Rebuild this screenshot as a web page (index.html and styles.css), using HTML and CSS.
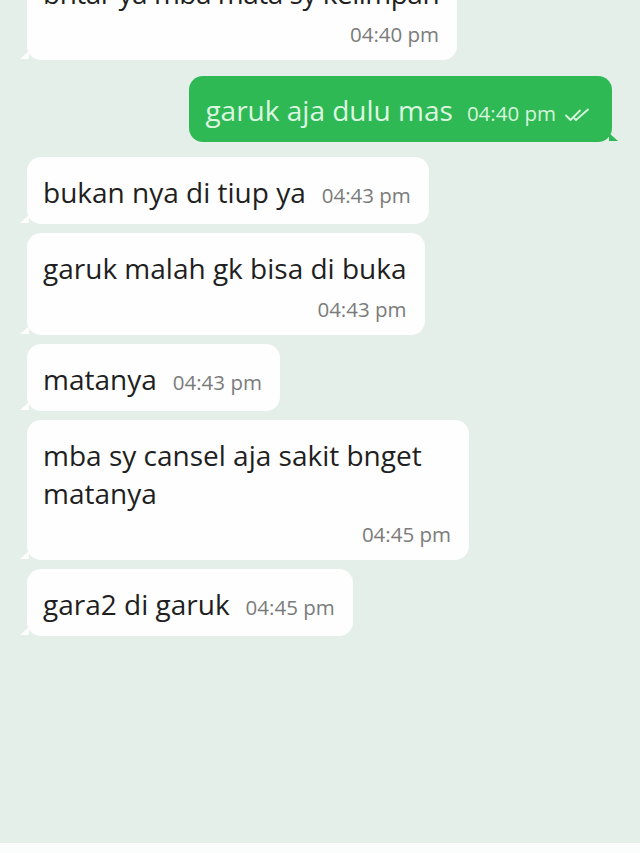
FILE: index.html
```html
<!DOCTYPE html>
<html lang="id">
<head>
<meta charset="utf-8">
<title>Chat</title>
<link rel="stylesheet" href="styles.css">
</head>
<body>
<main class="chat">
  <div class="thread">
    <div class="msg in multi">
      <div class="text oneline">bntar ya mba mata sy kelimpan</div>
      <div class="time">04:40 pm</div>
    </div>

    <div class="msg out">
      <span class="text">garuk aja dulu mas</span><span class="time">04:40 pm</span><svg class="ticks" viewBox="0 0 28 14" width="28" height="14" aria-hidden="true"><path d="M2 7.5 L6.5 12 L16 2.5 M10.5 10.5 L12 12 L24 1.5"/></svg>
    </div>

    <div class="msg in gap">
      <span class="text">bukan nya di tiup ya</span><span class="time">04:43 pm</span>
    </div>

    <div class="msg in multi">
      <div class="text">garuk malah gk bisa di buka</div>
      <div class="time">04:43 pm</div>
    </div>

    <div class="msg in">
      <span class="text">matanya</span><span class="time">04:43 pm</span>
    </div>

    <div class="msg in multi">
      <div class="text">mba sy cansel aja sakit bnget matanya</div>
      <div class="time">04:45 pm</div>
    </div>

    <div class="msg in">
      <span class="text">gara2 di garuk</span><span class="time">04:45 pm</span>
    </div>
  </div>
</main>
</body>
</html>
```

FILE: styles.css
```css
html, body {
  margin: 0;
  padding: 0;
}

body {
  background: #fbfdfc;
  font-family: "Open Sans", "Noto Sans", sans-serif;
  color: #1f1f1f;
}

.chat {
  height: 843px;
  background: #e4efe9;
  overflow: hidden;
}

.thread {
  display: flex;
  flex-direction: column;
  gap: 9px;
  margin-top: -42px;
  padding: 0 28px 0 27px;
}

.msg {
  position: relative;
  box-sizing: border-box;
  width: fit-content;
  max-width: 442px;
  padding: 16px 18px 13px 16px;
  border-radius: 14px;
  font-size: 28px;
  line-height: 38px;
}

.msg.in {
  align-self: flex-start;
  background: #fdfefd;
}

.msg.out {
  align-self: flex-end;
  background: #2fb955;
  color: #dcf7e0;
  margin-top: 7px;
  padding-top: 15px;
  padding-right: 20px;
}

.msg.gap {
  margin-top: 6px;
}

.text.oneline {
  white-space: nowrap;
  letter-spacing: -0.5px;
}

/* little tails at the bottom corner of each bubble */
.msg.in::before {
  content: "";
  position: absolute;
  left: -7px;
  bottom: 1px;
  border-right: 9px solid #fdfefd;
  border-top: 8px solid transparent;
}

.msg.out::after {
  content: "";
  position: absolute;
  right: -6px;
  bottom: 1px;
  border-left: 9px solid #2fb955;
  border-top: 8px solid transparent;
}

.time {
  font-size: 20.5px;
  line-height: 20px;
  color: #7b7b7b;
}

span.time {
  margin-left: 16px;
}

.msg.out .time {
  color: #d6f5dc;
  margin-left: 14px;
}

.msg.multi {
  padding-bottom: 16px;
}

.msg.multi .time {
  text-align: right;
  margin-top: 12px;
}

.ticks {
  margin-left: 8px;
  vertical-align: -1px;
  fill: none;
  stroke: #d6f5dc;
  stroke-width: 1.8;
  stroke-linecap: round;
  stroke-linejoin: round;
}
```
